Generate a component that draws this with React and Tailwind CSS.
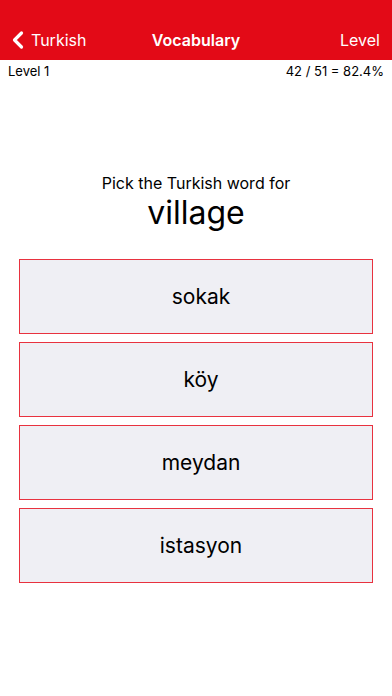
import { ChevronLeft } from "lucide-react";

const choices = ["sokak", "köy", "meydan", "istasyon"];

export default function App() {
  return (
    <div className="w-[392px] h-[696px] bg-white flex flex-col" style={{ fontFamily: "Inter, 'Liberation Sans', sans-serif" }}>
      <div className="bg-[#e30a17] h-[60px] pt-[20px] flex items-center justify-between px-[10px] text-white">
        <div className="flex items-center w-[110px] text-[16px]">
          <ChevronLeft className="w-[28px] h-[28px] -ml-[6px] -mr-[1px]" strokeWidth={2.75} />
          <span>Turkish</span>
        </div>
        <div className="text-[16px] font-semibold">Vocabulary</div>
        <div className="w-[110px] text-right text-[16px] pr-[2px]">Level</div>
      </div>
      <div className="flex justify-between px-[8px] pt-[2px] text-[13px] text-black h-[20px]">
        <span>Level 1</span>
        <span>42 / 51 = 82.4%</span>
      </div>
      <div className="flex flex-col items-center mt-[92px]">
        <div className="text-[16px] leading-[22px] text-black">Pick the Turkish word for</div>
        <div className="text-[32px] leading-[38px] text-black">village</div>
      </div>
      <div className="flex flex-col gap-[8px] px-[19px] mt-[27px]">
        {choices.map((c) => (
          <button key={c} className="h-[75px] border border-[#e8323f] bg-[#efeff4] text-[21px] text-black flex items-center justify-center pl-[10px]">
            {c}
          </button>
        ))}
      </div>
    </div>
  );
}
